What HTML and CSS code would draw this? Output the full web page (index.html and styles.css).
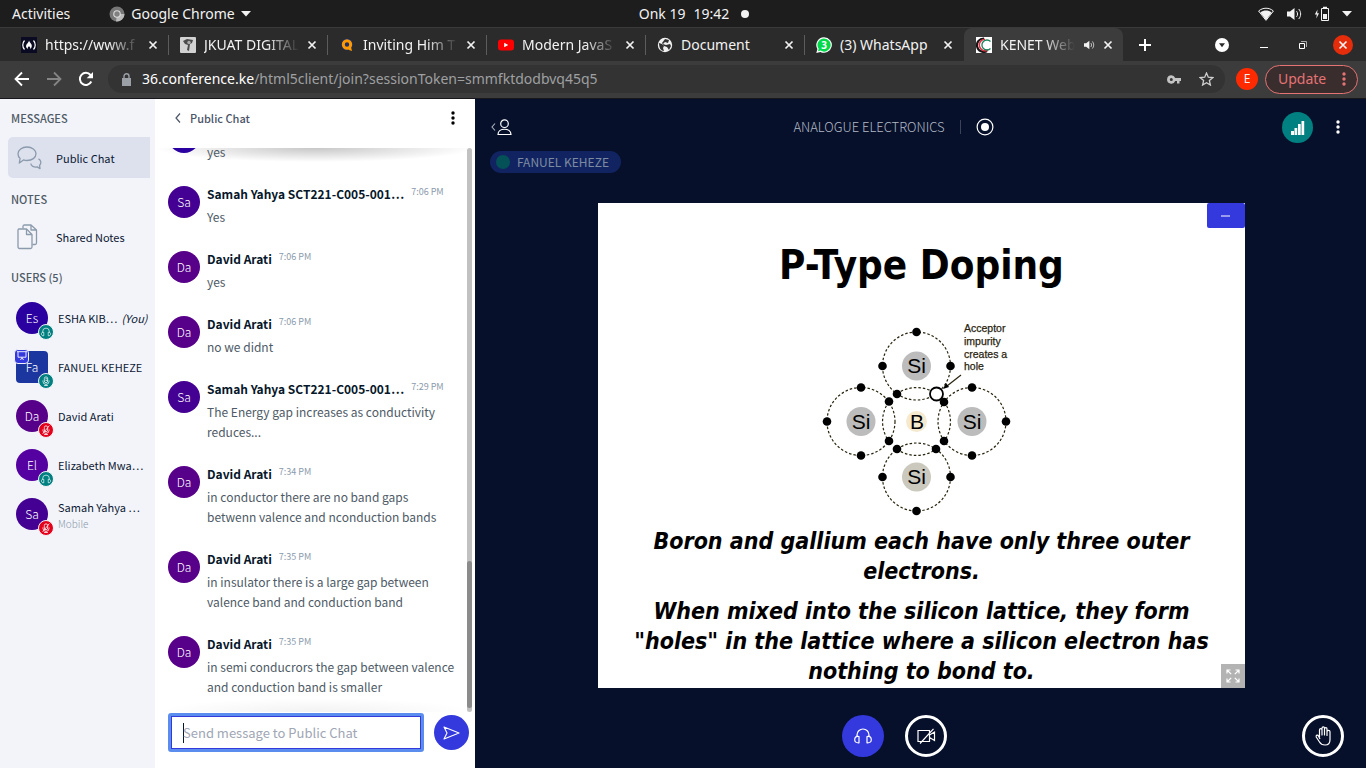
FILE: index.html
```html
<!DOCTYPE html>
<html lang="en">
<head>
<meta charset="utf-8">
<meta name="viewport" content="width=device-width, initial-scale=1">
<title>KENET Web Conference</title>
<link rel="stylesheet" href="styles.css">
</head>
<body>
<svg class="sprite" aria-hidden="true">
  <symbol id="close" viewBox="0 0 10 10"><path d="M1.500 1.500l7 7M8.500 1.500l-7 7" fill="none" stroke="currentColor" stroke-width="1.700"/></symbol>
  <symbol id="headphones" viewBox="0 0 18 18"><path d="M3 10V8a6 6 0 0 1 12 0v2M5 9.500c-3-.8-4.300 1.100-4.300 3.200S2.200 16 5 15.800zM13 9.500c3-.8 4.300 1.100 4.300 3.200S15.800 16 13 15.800z" fill="none" stroke="currentColor" stroke-width="1.200" stroke-linejoin="round"/></symbol>
  <symbol id="mic" viewBox="0 0 18 18"><path d="M6 4.500a3 3 0 0 1 6 0V9a3 3 0 0 1-6 0zM3.500 8v1.500a5.500 5.500 0 0 0 11 0V8M9 15v2.500M5.500 17.200h7M8 5h4M8 8h4" fill="none" stroke="currentColor" stroke-width="1.300"/></symbol>
  <symbol id="muted" viewBox="0 0 18 18"><path d="M6 4.500a3 3 0 0 1 6 0V9a3 3 0 0 1-6 0zM3.500 8v1.500a5.500 5.500 0 0 0 11 0V8M9 15v2.500M5.500 17.200h7M3 16L15 1" fill="none" stroke="currentColor" stroke-width="1.400"/></symbol>
  <symbol id="dots" viewBox="0 0 4 16"><circle cx="2" cy="3" r="1.700"/><circle cx="2" cy="8" r="1.700"/><circle cx="2" cy="13" r="1.700"/></symbol>
  <symbol id="speaker" viewBox="0 0 16 14"><path d="M1 4.500h3L8.500 1v12L4 9.500H1z" fill="currentColor"/><path d="M10.500 4.200c1.400 1.500 1.400 4.100 0 5.600M12.700 2c2.600 2.800 2.600 7.200 0 10" fill="none" stroke="currentColor"/></symbol>
</svg>

<header class="desktop-bar">
  <div class="desktop-left">
    <button class="plain">Activities</button>
    <button class="plain app-menu">
      <svg width="16" height="16" viewBox="0 0 16 16"><circle cx="8" cy="8" r="7.500" fill="#777"/><path d="M8 8h7.500A7.500 7.500 0 0 1 7 15.400z" fill="#bbb"/><circle cx="8" cy="8" r="3.800" fill="#ddd"/><circle cx="8" cy="8" r="2.700" fill="#808080"/></svg>
      Google Chrome
      <svg width="10" height="6" viewBox="0 0 10 6"><path d="M0 0h10L5 5.500z" fill="#f2f2f2"/></svg>
    </button>
  </div>
  <button class="plain clock"><span>Onk 19</span><span>19:42</span><i class="clock-dot"></i></button>
  <div class="desktop-right">
    <svg width="16" height="14" viewBox="0 0 16 14"><path d="M.6 4C4.800.3 11.200.3 15.400 4L8 13.400z" fill="none" stroke="#f2f2f2"/><path d="M2.400 5.400c3.400-2.400 7.800-2.400 11.200 0L8 13z" fill="#f2f2f2"/></svg>
    <svg class="volume" width="16" height="14"><use href="#speaker"/></svg>
    <svg width="16" height="16" viewBox="0 0 16 16"><path d="M7.500 2.500h7v12h-7z" fill="none" stroke="#f2f2f2"/><path d="M9 .8h4v1.500H9zM9 8h4v5H9z" fill="#f2f2f2"/><path d="M3.500 3.500L.8 8.500h2l-.5 4L5 7.300H3.200z" fill="#f2f2f2"/></svg>
    <svg width="10" height="6" viewBox="0 0 10 6"><path d="M0 0h10L5 5.500z" fill="#f2f2f2"/></svg>
  </div>
</header>

<nav class="tab-strip" aria-label="Browser tabs">
  <div class="tab"><svg class="favicon" viewBox="0 0 16 16"><path fill="#0a0a23" d="M0 0h16v16H0z"/><path d="M3.500 3.500c-2.300 2.500-2.300 6.500 0 9M12.500 3.500c2.300 2.500 2.300 6.500 0 9" fill="none" stroke="#fff" stroke-width="1.200"/><path d="M8 3.500c.5 2 3 3.500 2.800 5.500-.1 1.600-1 2.500-1.600 3 .3-1.700-.4-2-1.200-2.700-.8.800-1.600 1.200-1 2.700-2-1-2.600-3-1.200-5C7 5.800 7.800 5 8 3.500z" fill="#fff"/></svg><span class="tab-title">https://www.f</span><button class="tab-close" aria-label="Close tab"><svg><use href="#close"/></svg></button></div>
  <div class="tab"><svg class="favicon" viewBox="0 0 16 16"><rect width="16" height="16" rx="1" fill="#d2d2d2"/><path d="M3 4l4-2 6 1-1 3-2 1-1 7-2-1 1-5-3-1z" fill="#4b4b4b"/><circle cx="9" cy="5.500" r="1.700" fill="#aaa"/></svg><span class="tab-title">JKUAT DIGITAL</span><button class="tab-close" aria-label="Close tab"><svg><use href="#close"/></svg></button></div>
  <div class="tab"><svg class="favicon" viewBox="0 0 16 16"><circle cx="8" cy="7.500" r="6" fill="#1b2f6e"/><circle cx="8" cy="7.500" r="3.700" fill="none" stroke="#f90" stroke-width="3"/><path d="M8 10h4l1 4-3-1z" fill="#f90"/></svg><span class="tab-title">Inviting Him T</span><button class="tab-close" aria-label="Close tab"><svg><use href="#close"/></svg></button></div>
  <div class="tab"><svg class="favicon" viewBox="0 0 16 16"><rect y="2.500" width="16" height="11" rx="3" fill="#f00"/><path d="M6.200 5.700v4.600l4-2.300z" fill="#fff"/></svg><span class="tab-title">Modern JavaS</span><button class="tab-close" aria-label="Close tab"><svg><use href="#close"/></svg></button></div>
  <div class="tab"><svg class="favicon" viewBox="0 0 16 16"><circle cx="8" cy="8" r="7.200" fill="#f1f1f1"/><path d="M2 6l3 1 2 2-1 2 1 3c-3 0-5-3-5-8zM8 2l4 1-1 3-3-1-2 2 3 1 4-1 1 2-2 4-2-3-3-1-2-3z" fill="#333"/></svg><span class="tab-title">Document</span><button class="tab-close" aria-label="Close tab"><svg><use href="#close"/></svg></button></div>
  <div class="tab tab-last"><svg class="favicon" viewBox="0 0 16 16"><path d="M8 .2a7.800 7.800 0 1 1-3.600 14.700L.3 16l1.100-4A7.800 7.800 0 0 1 8 .2z" fill="#fff"/><path d="M8 1.400a6.600 6.600 0 1 1-3.400 12.200l-2.600.7.700-2.500A6.600 6.600 0 0 1 8 1.400z" fill="#00d94a"/><text x="8" y="11.500" text-anchor="middle" font-family="Noto Sans, sans-serif" font-weight="700" font-size="10" fill="#fff">3</text></svg><span class="tab-title">(3) WhatsApp</span><button class="tab-close" aria-label="Close tab"><svg><use href="#close"/></svg></button></div>
  <div class="tab tab-active"><svg class="favicon" viewBox="0 0 16 16"><path fill="#fff" d="M0 0h16v16H0z"/><path d="M8 1.500a6.700 6.700 0 1 0 3 12.500" fill="none" stroke="#151515" stroke-width="2.200"/><path d="M9 2.200a5.800 5.800 0 1 0 3 10.800" fill="none" stroke="#df2d42" stroke-width="1.500"/><path d="M14.500 4.500a5 5 0 1 0 0 7" fill="none" stroke="#16845b" stroke-width="1.300"/></svg><span class="tab-title">KENET Web</span><svg class="tab-audio"><use href="#speaker"/></svg><button class="tab-close" aria-label="Close tab"><svg><use href="#close"/></svg></button></div>
  <button class="plain new-tab" aria-label="New tab"><svg width="14" height="14" viewBox="0 0 14 14"><path d="M7 1v12M1 7h12" stroke="#fff" stroke-width="2"/></svg></button>
  <div class="window-controls">
    <button class="plain" aria-label="Search tabs"><svg width="14" height="14" viewBox="0 0 14 14"><circle cx="7" cy="7" r="7" fill="#fff"/><path d="M4 5.300h6L7 9.300z" fill="#2b2b2b"/></svg></button>
    <button class="plain" aria-label="Minimise"><svg width="8" height="8" viewBox="0 0 8 8"><path d="M0 6.500h8" stroke="#fff"/></svg></button>
    <button class="plain" aria-label="Restore"><svg width="8" height="8" viewBox="0 0 8 8"><path d="M.5 2.500h5v5h-5z" fill="none" stroke="#fff"/><path d="M2 .5h5.500V6" fill="none" stroke="#aaa"/></svg></button>
    <button class="plain close-window" aria-label="Close window"><svg width="10" height="10"><use href="#close"/></svg></button>
  </div>
</nav>

<div class="toolbar">
  <button class="plain" aria-label="Back"><svg width="16" height="16" viewBox="0 0 16 16"><path d="M15 8H2M8 1.500L1.500 8 8 14.500" fill="none" stroke="#fff" stroke-width="1.800"/></svg></button>
  <button class="plain" aria-label="Forward"><svg width="16" height="16" viewBox="0 0 16 16"><path d="M1 8h13M8 1.500L14.500 8 8 14.500" fill="none" stroke="#858585" stroke-width="1.800"/></svg></button>
  <button class="plain" aria-label="Reload"><svg width="16" height="16" viewBox="0 0 16 16"><path d="M13.300 10.500A6 6 0 1 1 12.500 4L14 5.500" fill="none" stroke="#fff" stroke-width="2"/><path d="M15 1v6.300H8.700z" fill="#fff"/></svg></button>
  <div class="address">
    <svg width="9" height="13" viewBox="0 0 9 13"><path d="M0 5h9v8H0z" fill="#9aa0a6"/><path d="M2 5V3.300a2.500 2.500 0 0 1 5 0V5" fill="none" stroke="#9aa0a6" stroke-width="1.400"/></svg>
    <span class="url"><b>36.conference.ke</b>/html5client/join?sessionToken=smmfktdodbvq45q5</span>
    <button class="plain" aria-label="Saved passwords"><svg width="14" height="9" viewBox="0 0 14 9"><path d="M4.300.3a4.200 4.200 0 1 0 3.900 5.700H10v2.500h2.500V6H14V3H8.200A4.200 4.200 0 0 0 4.300.3zm0 2.700a1.500 1.500 0 1 1 0 3 1.500 1.500 0 0 1 0-3z" fill="#c3c3c3" fill-rule="evenodd"/></svg></button>
    <button class="plain" aria-label="Bookmark"><svg width="15" height="14" viewBox="0 0 15 14"><path d="M7.500 1l1.800 4.200 4.500.4-3.400 3 1 4.400-3.900-2.300L3.600 13l1-4.400-3.400-3 4.500-.4z" fill="none" stroke="#d0d0d0" stroke-width="1.300"/></svg></button>
  </div>
  <button class="profile" aria-label="Profile">E</button>
  <button class="update">Update <svg width="4" height="16" fill="currentColor"><use href="#dots"/></svg></button>
</div>

<div class="conference">
  <aside class="sidebar">
    <h2 class="side-heading">MESSAGES</h2>
    <button class="side-item side-item-active"><svg width="25" height="24" viewBox="0 0 25 24"><path d="M10 1c5 0 9 2.900 9 6.800s-4 6.700-9 6.700c-1.400 0-2.500-.2-3.500-.6L2.300 17l.8-4.600C1.600 11.200 1 9.600 1 7.800 1 3.900 5 1 10 1z"/><path d="M21.500 12.800c2.800 1.400 3 4.700 1.100 6.500l.4 3.300-2.800-1.700c-3.400.6-6-.8-6.400-3.400"/></svg>Public Chat</button>
    <h2 class="side-heading">NOTES</h2>
    <button class="side-item"><svg width="25" height="26" viewBox="0 0 25 26"><path d="M1.500 5h8l5.500 5.500V23a1.500 1.500 0 0 1-1.500 1.500h-11A1.500 1.500 0 0 1 1 23V6z"/><path d="M9.500 5v5.500H15M6 4.500V2.300A1.300 1.300 0 0 1 7.300 1H14l5.500 5v13a1.500 1.500 0 0 1-1.500 1.500h-2.500M14 1v5h5.500"/></svg>Shared Notes</button>
    <h2 class="side-heading">USERS (5)</h2>
    <ul class="users">
      <li class="user"><span class="avatar c-es">Es<i class="status ok"><svg><use href="#headphones"/></svg></i></span><span class="user-name">ESHA KIB…</span><em>(You)</em></li>
      <li class="user"><span class="avatar square c-fa">Fa<i class="presenter"><svg width="10" height="10" viewBox="0 0 10 10"><path d="M0 .7h10M1 .7v5.500h8V.7M3.500 9L5 6.500 6.500 9" fill="none" stroke="#fff" stroke-width=".9"/></svg></i><i class="status ok"><svg><use href="#mic"/></svg></i></span><span class="user-name">FANUEL KEHEZE</span></li>
      <li class="user"><span class="avatar c-da">Da<i class="status off"><svg><use href="#muted"/></svg></i></span><span class="user-name">David Arati</span></li>
      <li class="user"><span class="avatar c-el">El<i class="status ok"><svg><use href="#headphones"/></svg></i></span><span class="user-name">Elizabeth Mwa…</span></li>
      <li class="user"><span class="avatar c-sa">Sa<i class="status off"><svg><use href="#muted"/></svg></i></span><span class="user-name">Samah Yahya …<small>Mobile</small></span></li>
    </ul>
  </aside>

  <section class="chat" aria-label="Public Chat">
    <header class="chat-header">
      <button class="plain chat-back"><svg width="6" height="10" viewBox="0 0 6 10"><path d="M5 .5L1 5l4 4.500" fill="none" stroke="currentColor" stroke-width="1.200"/></svg>Public Chat</button>
      <button class="plain" aria-label="Chat options"><svg width="4" height="16"><use href="#dots"/></svg></button>
    </header>
    <div class="chat-body">
      <div class="messages">
        <article class="message"><span class="avatar c-es">Es</span><div class="message-text"><p>yes</p></div></article>
        <article class="message"><span class="avatar c-sa">Sa</span><div class="message-text"><h3><b>Samah Yahya SCT221-C005-001…</b><time>7:06 PM</time></h3><p>Yes</p></div></article>
        <article class="message"><span class="avatar c-da">Da</span><div class="message-text"><h3><b>David Arati</b><time>7:06 PM</time></h3><p>yes</p></div></article>
        <article class="message"><span class="avatar c-da">Da</span><div class="message-text"><h3><b>David Arati</b><time>7:06 PM</time></h3><p>no we didnt</p></div></article>
        <article class="message"><span class="avatar c-sa">Sa</span><div class="message-text"><h3><b>Samah Yahya SCT221-C005-001…</b><time>7:29 PM</time></h3><p>The Energy gap increases as conductivity reduces...</p></div></article>
        <article class="message"><span class="avatar c-da">Da</span><div class="message-text"><h3><b>David Arati</b><time>7:34 PM</time></h3><p>in conductor there are no band gaps betwenn valence and nconduction bands</p></div></article>
        <article class="message"><span class="avatar c-da">Da</span><div class="message-text"><h3><b>David Arati</b><time>7:35 PM</time></h3><p>in insulator there is a large gap between valence band and conduction band</p></div></article>
        <article class="message"><span class="avatar c-da">Da</span><div class="message-text"><h3><b>David Arati</b><time>7:35 PM</time></h3><p>in semi conducrors the gap between valence and conduction band is smaller</p></div></article>
      </div>
      <div class="scrollbar"><div class="scroll-thumb"></div></div>
    </div>
    <form class="composer">
      <input type="text" aria-label="Message" placeholder="Send message to Public Chat" autofocus>
      <button type="button" class="send" aria-label="Send message"><svg width="17" height="14" viewBox="0 0 17 14"><path d="M1 1l15 6L1 13l3-6z" fill="none" stroke="#fff" stroke-width="1.100" stroke-linejoin="round"/></svg></button>
    </form>
  </section>

  <main class="stage">
    <header class="stage-header">
      <button class="plain" aria-label="Hide user list"><svg width="22" height="17" viewBox="0 0 22 17"><path d="M4 4.500L1 8l3 3.500" fill="none" stroke="#aeb4c0" stroke-width="1.100"/><circle cx="13.500" cy="4.700" r="3.800" fill="none" stroke="#fff" stroke-width="1.200"/><path d="M7 15.500c0-7 13-7 13 0z" fill="none" stroke="#fff" stroke-width="1.200"/></svg></button>
      <div class="room"><h1>ANALOGUE ELECTRONICS</h1><i class="room-divider"></i><svg width="18" height="18" viewBox="0 0 18 18"><circle cx="9" cy="9" r="7.900" fill="none" stroke="#fff" stroke-width="1.200"/><circle cx="9" cy="9" r="4" fill="#fff"/></svg></div>
      <div class="stage-actions">
        <button class="signal" aria-label="Connection status"><svg width="15" height="15" viewBox="0 0 15 15"><path d="M1 11h3v4H1zM4.500 8h2.700v7H4.500zM8 4h2.700v11H8zM11.500 1h2.700v14h-2.700z" fill="#fff"/></svg></button>
        <button class="plain" aria-label="Options"><svg width="4" height="16" fill="#fff"><use href="#dots"/></svg></button>
      </div>
    </header>
    <div class="talking"><i></i>FANUEL KEHEZE</div>
    <div class="presentation">
      <article class="slide">
        <button class="minimize" aria-label="Minimise presentation"><svg width="9" height="2"><path d="M0 1h9" stroke="#fff"/></svg></button>
        <h2>P-Type Doping</h2>
        <svg class="diagram" width="220" height="204" viewBox="0 0 220 204" role="img" aria-label="Boron atom bonded to four silicon atoms">
          <g fill="#bcbcbc"><circle cx="106.500" cy="50" r="14.500"/><circle cx="51" cy="105.500" r="14.500"/><circle cx="162" cy="105.500" r="14.500"/><circle cx="106.500" cy="161" r="14.500" fill="#cbc9bd"/><circle cx="106.500" cy="105.500" r="10.500" fill="#f5ead0"/></g>
          <g fill="none" stroke="#29240f" stroke-width="1.200" stroke-dasharray="2.500 2"><circle cx="106.500" cy="50" r="34"/><circle cx="51" cy="105.500" r="34"/><circle cx="162" cy="105.500" r="34"/><circle cx="106.500" cy="161" r="34"/><path d="M87 77.700a34 34 0 0 1 39 0M87 133.300a34 34 0 0 0 39 0M78.700 86a34 34 0 0 0 0 39M134.300 86a34 34 0 0 1 0 39"/></g>
          <g font-family="Liberation Sans, sans-serif" font-size="21" text-anchor="middle"><text x="106.500" y="57">Si</text><text x="51" y="113">Si</text><text x="162" y="113">Si</text><text x="106.500" y="168">Si</text><text x="107" y="113">B</text></g>
          <g><circle cx="106.500" cy="16" r="4.300"/><circle cx="72.500" cy="50" r="4.300"/><circle cx="140.500" cy="50" r="4.300"/><circle cx="87" cy="78" r="4.300"/><circle cx="79" cy="85.500" r="4.300"/><circle cx="134" cy="86" r="4.300"/><circle cx="51" cy="71.500" r="4.300"/><circle cx="17" cy="105.500" r="4.300"/><circle cx="51" cy="139.500" r="4.300"/><circle cx="162" cy="71.500" r="4.300"/><circle cx="196" cy="105.500" r="4.300"/><circle cx="162" cy="139.500" r="4.300"/><circle cx="79" cy="125" r="4.300"/><circle cx="134" cy="125" r="4.300"/><circle cx="87" cy="133" r="4.300"/><circle cx="126" cy="133" r="4.300"/><circle cx="72.500" cy="161" r="4.300"/><circle cx="140.500" cy="161" r="4.300"/><circle cx="106.500" cy="195" r="4.300"/></g>
          <circle cx="126.500" cy="78" r="6.500" fill="#fff" stroke="#000" stroke-width="1.800"/><path d="M151 59l-14 11" stroke="#29240f" stroke-width="1.200"/><path d="M133 73l3-6 3 4z"/>
          <g font-family="Liberation Sans, sans-serif" font-size="10.500" fill="#29240f" stroke="#29240f" stroke-width=".25"><text x="154" y="16">Acceptor</text><text x="154" y="29">impurity</text><text x="154" y="42">creates a</text><text x="154" y="54">hole</text></g>
        </svg>
        <p>Boron and gallium each have only three outer electrons.</p>
        <p>When mixed into the silicon lattice, they form "holes" in the lattice where a silicon electron has nothing to bond to.</p>
        <button class="fullscreen" aria-label="Fullscreen"><svg width="14" height="14" viewBox="0 0 14 14"><path d="M1 4.500V1h3.500M1 1l4.200 4.200M9.500 1H13v3.500M13 1L8.800 5.200M1 9.500V13h3.500M1 13l4.200-4.200M13 9.500V13H9.500M13 13L8.800 8.800" fill="none" stroke="#fff" stroke-width="1.200"/></svg></button>
      </article>
    </div>
    <footer class="actions">
      <div class="media-actions">
        <button class="round audio" aria-label="Leave audio"><svg width="18" height="18"><use href="#headphones"/></svg></button>
        <button class="round" aria-label="Share webcam"><svg width="19" height="16" viewBox="0 0 19 16"><path d="M1 2.500h11.500v11H1zM12.500 7l5-3v8.500l-5-3M3 15.500L16.500.8" fill="none" stroke="#fff" stroke-width="1.200"/></svg></button>
      </div>
      <button class="round" aria-label="Raise hand"><svg width="17" height="20" viewBox="0 0 17 20"><path d="M4.500 11V4c0-1.800 2.500-1.800 2.500 0v5V2.300c0-1.800 2.500-1.800 2.500 0V9 3c0-1.800 2.500-1.800 2.500 0v6.500V5.700c0-1.700 3-1.700 3 0v8c0 3.500-1.800 5.300-5 5.300-3 0-4.400-1-5.500-3L1.200 11c-.5-2 1.500-2.600 2.300-1L5 13" fill="none" stroke="#fff" stroke-width="1.200" stroke-linejoin="round"/></svg></button>
    </footer>
  </main>
</div>
</body>
</html>
```
FILE: styles.css
```css
* { box-sizing: border-box; }

body {
  margin: 0;
  height: 100vh;
  display: flex;
  flex-direction: column;
  overflow: hidden;
  background: #1d1d1d;
  color: #f2f2f2;
  font: 14px/20px "Noto Sans", sans-serif;
}

button { font: inherit; color: inherit; border: 0; padding: 0; margin: 0; cursor: pointer; }
svg { display: block; flex: none; }
h1, h2, h3, p, ul { margin: 0; padding: 0; }
i { font-style: normal; }
.plain { background: none; display: flex; align-items: center; justify-content: center; }
.sprite { display: none; }

/* Desktop bar */
.desktop-bar {
  height: 27px;
  flex: none;
  display: grid;
  grid-template-columns: 1fr auto 1fr;
  align-items: center;
  padding: 0 14px 0 12px;
}
.desktop-left { display: flex; gap: 39px; }
.app-menu { gap: 6px; }
.clock { gap: 8px; padding-left: 24px; }
.clock-dot { width: 8px; height: 8px; margin-left: 4px; border-radius: 50%; background: #f2f2f2; }
.desktop-right { display: flex; align-items: center; justify-content: flex-end; gap: 12px; }

/* Tabs */
.tab-strip {
  height: 34px;
  flex: none;
  display: flex;
  align-items: center;
  padding-left: 10px;
  background: #2b2b2b;
  border-top: 1px solid #3a3a3a;
}
.tab {
  flex: 0 1 159px;
  min-width: 0;
  height: 20px;
  display: flex;
  align-items: center;
  padding: 0 6px 0 11px;
  border-right: 1px solid #5c5c5c;
}
.tab-last { border-color: transparent; }
.tab-active { height: 33px; background: #3c3c3c; border: 0; border-radius: 8px 8px 0 0; padding-left: 12px; }
.favicon { width: 16px; height: 16px; margin-right: 8px; }
.tab-title {
  flex: 1;
  min-width: 0;
  white-space: nowrap;
  overflow: hidden;
  mask-image: linear-gradient(to right, #000 calc(100% - 32px), transparent);
}
.tab:nth-child(5) .tab-title, .tab-last .tab-title { mask-image: none; }
.tab-audio { width: 12px; height: 10px; margin: 0 0 0 8px; }
.tab-close { width: 18px; height: 18px; margin-left: 4px; background: none; display: flex; align-items: center; justify-content: center; }
.tab-close svg { width: 10px; height: 10px; }
.new-tab { width: 28px; height: 28px; margin-left: 8px; }
.window-controls { margin-left: auto; padding-right: 13px; display: flex; align-items: center; gap: 31px; }
.close-window { width: 20px; height: 20px; margin-left: -5px; border-radius: 50%; background: #e62d0b; }

/* Toolbar */
.toolbar {
  height: 38px;
  flex: none;
  display: flex;
  align-items: center;
  gap: 16px;
  padding: 0 8px 1px 14px;
  background: #3c3c3c;
  border-bottom: 1px solid #17171c;
}
.address {
  flex: 1;
  min-width: 0;
  height: 28px;
  margin-left: -2px;
  padding: 0 11px 0 14px;
  display: flex;
  align-items: center;
  gap: 18px;
  border-radius: 14px;
  background: #333;
}
.url { flex: 1; min-width: 0; margin-left: -7px; color: #9fa0a2; white-space: nowrap; overflow: hidden; }
.url b { color: #fff; font-weight: 400; }
.profile { width: 22px; height: 22px; margin-left: -5px; border-radius: 50%; background: #ff2a00; font-size: 12px; line-height: 20px; }
.update {
  width: 93px;
  height: 29px;
  margin-left: -9px;
  display: flex;
  align-items: center;
  justify-content: space-between;
  padding: 0 11px 0 12px;
  border: 1px solid #e57373;
  border-radius: 15px;
  background: #3a2d2e;
  color: #e57373;
}

/* Conference */
.conference {
  flex: 1;
  min-height: 0;
  display: flex;
  background: #06102a;
  font-family: "Noto Sans CJK KR", "Noto Sans", sans-serif;
  font-size: 12px;
}
.sidebar { width: 155px; flex: none; padding: 9px 5px 0 8px; background: #f3f4f9; color: #0b1834; font-size: 11px; }
.side-heading { padding-left: 3px; font-size: 11px; line-height: 20px; font-weight: 500; color: #4e5a66; }
.side-item {
  width: 100%;
  height: 41px;
  display: flex;
  align-items: center;
  gap: 14px;
  margin: 9px 0 11px;
  padding-left: 9px;
  background: none;
  border-radius: 5px 0 0 5px;
}
.side-item + .side-heading + .side-item { margin: 7px 0 10px; }
.side-item svg { fill: none; stroke: #8b9aac; stroke-width: 1.3; stroke-linejoin: round; }
.side-item-active { background: #dce1ed; }
.users { list-style: none; padding: 6px 0 0 8px; }
.user { height: 49px; display: flex; align-items: center; gap: 10px; margin-right: -5px; white-space: nowrap; }
.user-name { min-width: 0; overflow: hidden; text-overflow: ellipsis; }
.user em { margin: 0 6px 0 -6px; flex: none; }
.user small { display: block; font-size: 10px; line-height: 13px; font-weight: 300; color: #8b9aac; }
.avatar {
  position: relative;
  width: 32px;
  height: 32px;
  flex: none;
  display: flex;
  align-items: center;
  justify-content: center;
  border-radius: 50%;
  color: #fff;
  font-size: 12px;
  font-weight: 300;
}
.square { border-radius: 4px; }
.c-es { background: #2a00a0; }
.c-fa { background: #1c36a0; }
.c-da { background: #570089; }
.c-el { background: #5500a0; }
.c-sa { background: #430092; }
.status, .presenter { position: absolute; display: flex; align-items: center; justify-content: center; border: 1px solid #f3f4f9; }
.status { right: -6px; bottom: -6px; width: 16px; height: 16px; border-radius: 50%; }
.status svg { width: 10px; height: 10px; }
.presenter { left: -2px; top: -2px; width: 15px; height: 15px; border-radius: 4px; background: #3339dc; }
.ok { background: #008081; }
.off { background: #e5001b; }

/* Chat */
.chat { width: 320px; flex: none; display: flex; flex-direction: column; background: #fff; color: #06172a; }
.chat-header { height: 49px; flex: none; display: flex; justify-content: space-between; align-items: flex-start; padding: 9px 20px 0; }
.chat-header .plain { height: 20px; }
.chat-back { gap: 9px; color: #4b5468; font-weight: 500; font-size: 11px; }
.chat-body {
  flex: 1;
  min-height: 0;
  display: flex;
  background:
    radial-gradient(farthest-side at 50% 0, rgba(0, 0, 0, .22), transparent) top / 100% 14px no-repeat,
    radial-gradient(farthest-side at 50% 100%, rgba(0, 0, 0, .05), transparent) bottom / 100% 14px no-repeat;
}
.messages {
  flex: 1;
  min-width: 0;
  display: flex;
  flex-direction: column;
  justify-content: flex-end;
  gap: 22px;
  padding: 0 0 15px 13px;
  overflow: hidden;
}
.message { display: flex; gap: 7px; flex: none; }
.message .avatar { margin-top: 2px; }
.message:first-child { align-items: flex-end; }
.message:first-child .avatar { margin-bottom: 9px; }
.message-text { flex: 1; min-width: 0; }
.message h3 { display: flex; gap: 7px; margin-bottom: 3px; font-size: 12px; line-height: 20px; }
.message h3 b { max-width: 204px; font-weight: 700; white-space: nowrap; overflow: hidden; text-overflow: ellipsis; }
.message time { font-size: 9px; line-height: 16px; font-weight: 400; color: #8b9aac; }
.message p { padding-right: 8px; color: #4e5a66; }
.scrollbar { width: 5px; margin: 0 3px 0 2px; border-radius: 3px; background: #c1c1c1; display: flex; align-items: flex-end; }
.scroll-thumb { width: 5px; height: 26%; margin-bottom: 4px; border-radius: 3px; background: #8b8b8b; }
.composer { flex: none; display: flex; align-items: center; gap: 12px; padding: 3px 6px 18px 15px; }
.composer input {
  flex: 1;
  min-width: 0;
  height: 35px;
  padding: 0 12px;
  border: 1px solid #3339dc;
  border-radius: 1px;
  outline: 3px solid #5b8def;
  outline-offset: -1px;
  box-shadow: inset 0 0 0 1px #3339dc;
  background: linear-gradient(#06172a, #06172a) 12px center / 1px 20px no-repeat #fff;
  caret-color: transparent;
  color: #06172a;
  font: inherit;
  font-size: 13px;
}
.composer input::placeholder { color: #a0a6b4; }
.send { width: 35px; height: 35px; display: flex; align-items: center; justify-content: center; border-radius: 50%; background: #3339dc; }

/* Stage */
.stage { flex: 1; min-width: 0; display: flex; flex-direction: column; color: #fff; }
.stage-header { flex: none; height: 52px; display: grid; grid-template-columns: auto 1fr auto; align-items: center; padding: 4px 26px 0 16px; }
.room { justify-self: center; display: flex; align-items: center; gap: 15px; margin-right: 8px; }
.room h1 { font-size: 13px; font-weight: 300; color: #b3b9c5; }
.room-divider { width: 1px; height: 14px; background: #3a4358; }
.stage-actions { display: flex; align-items: center; justify-content: flex-end; gap: 23px; }
.signal { width: 31px; height: 31px; display: flex; align-items: center; justify-content: center; border-radius: 50%; background: #008081; }
.talking {
  align-self: flex-start;
  height: 22px;
  display: flex;
  align-items: center;
  gap: 7px;
  margin-left: 15px;
  padding: 0 12px 0 6px;
  border-radius: 11px;
  background: #112461;
  color: #7d8ba0;
}
.talking i { width: 14px; height: 14px; border-radius: 50%; background: #045157; }
.presentation { flex: 1; min-height: 0; display: flex; justify-content: center; padding: 30px 0 16px 2px; }
.slide {
  position: relative;
  height: 100%;
  aspect-ratio: 4 / 3;
  padding: 38px 24px 0;
  display: flex;
  flex-direction: column;
  align-items: center;
  background: #fff;
  color: #000;
  text-align: center;
  font-family: "DejaVu Sans Condensed", "DejaVu Sans", sans-serif;
}
.slide h2 { font-size: 40px; line-height: 48px; font-weight: 700; }
.diagram { margin: 27px 4px 6px 0; font-weight: 400; }
.slide p { font-size: 23px; line-height: 30px; font-weight: 700; font-style: italic; margin-bottom: 10px; }
.minimize, .fullscreen { position: absolute; right: 0; display: flex; align-items: center; justify-content: center; }
.minimize { top: 0; width: 38px; height: 25px; border-radius: 2px; background: #3339dc; }
.fullscreen { bottom: 0; width: 24px; height: 24px; background: #b3b3b3; }
.actions { flex: none; height: 64px; display: grid; grid-template-columns: 1fr auto; align-items: start; padding: 11px 22px 0 12px; }
.media-actions { justify-self: center; display: flex; gap: 21px; }
.round { width: 42px; height: 42px; display: flex; align-items: center; justify-content: center; border: 3px solid #fff; border-radius: 50%; background: none; }
.audio { border: 0; background: #3339dc; }
```
